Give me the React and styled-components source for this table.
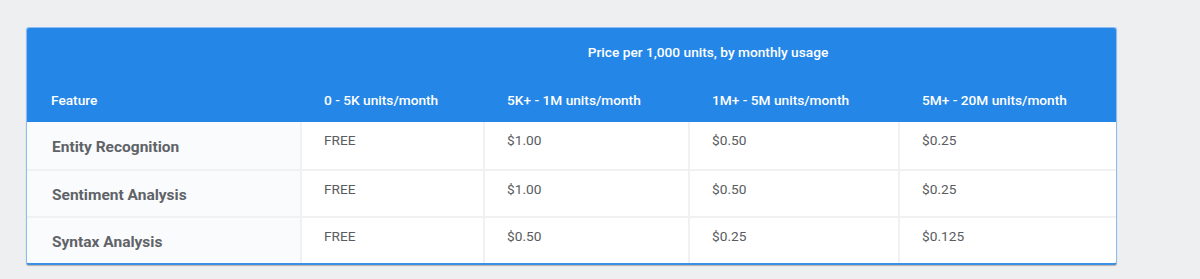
import React from 'react';
import styled, { createGlobalStyle } from 'styled-components';

const tiers = [
  '0 - 5K units/month',
  '5K+ - 1M units/month',
  '1M+ - 5M units/month',
  '5M+ - 20M units/month',
];

const rows = [
  { feature: 'Entity Recognition', prices: ['FREE', '$1.00', '$0.50', '$0.25'] },
  { feature: 'Sentiment Analysis', prices: ['FREE', '$1.00', '$0.50', '$0.25'] },
  { feature: 'Syntax Analysis', prices: ['FREE', '$0.50', '$0.25', '$0.125'] },
];

const App = () => {
  return (
    <>
      <GlobalStyle />
      <Page>
        <Card>
          <Header>
            <span />
            <Caption>Price per 1,000 units, by monthly usage</Caption>
            <HeadCell>Feature</HeadCell>
            {tiers.map((tier) => (
              <HeadCell key={tier}>{tier}</HeadCell>
            ))}
          </Header>
          <Body>
            {rows.map((row, index) => (
              <Row key={row.feature} first={index === 0}>
                <FeatureCell>{row.feature}</FeatureCell>
                {row.prices.map((price, i) => (
                  <PriceCell key={i}>{price}</PriceCell>
                ))}
              </Row>
            ))}
          </Body>
        </Card>
      </Page>
    </>
  );
};

export default App;

const GlobalStyle = createGlobalStyle`
  html, body {
    margin: 0;
    background: #eeeff1;
  }
  body {
    font-family: Roboto, 'Liberation Sans', sans-serif;
  }
`;

const Page = styled.div`
  height: 279px;
  padding: 27px 0 0 26px;
  box-sizing: border-box;
`;

const columns = '273px 183px 205px 210px 1fr';

const Card = styled.div`
  width: 1091px;
  box-sizing: border-box;
  border: 1px solid #8fbdf1;
  border-bottom: 2px solid #3a8fe6;
  border-radius: 3px;
  overflow: hidden;
  background: #fff;
  box-shadow: 0 1px 1px rgba(120, 100, 80, 0.45);
`;

const Header = styled.div`
  display: grid;
  grid-template-columns: ${columns};
  grid-template-rows: 48px 46px;
  background: #2487e8;
  color: #fff;
  font-size: 13.7px;
  font-weight: 500;
`;

const Caption = styled.div`
  grid-column: 2 / -1;
  display: flex;
  align-items: center;
  justify-content: center;
`;

const HeadCell = styled.div`
  display: flex;
  align-items: center;
  padding-left: 24px;
  padding-top: 1px;
`;

const Body = styled.div`
  display: flex;
  flex-direction: column;
`;

const Row = styled.div`
  display: grid;
  grid-template-columns: ${columns};
  height: 47px;
  border-top: ${({ first }) => (first ? 'none' : '2px solid #f0f1f3')};
  box-sizing: border-box;
`;

const FeatureCell = styled.div`
  display: flex;
  align-items: center;
  padding: 3px 0 0 25px;
  background: #fafbfc;
  color: #5f6368;
  font-size: 15.5px;
  font-weight: 700;
`;

const PriceCell = styled.div`
  padding: 10px 0 0 22px;
  border-left: 2px solid #f0f1f3;
  color: #595c60;
  font-size: 13.7px;
`;
